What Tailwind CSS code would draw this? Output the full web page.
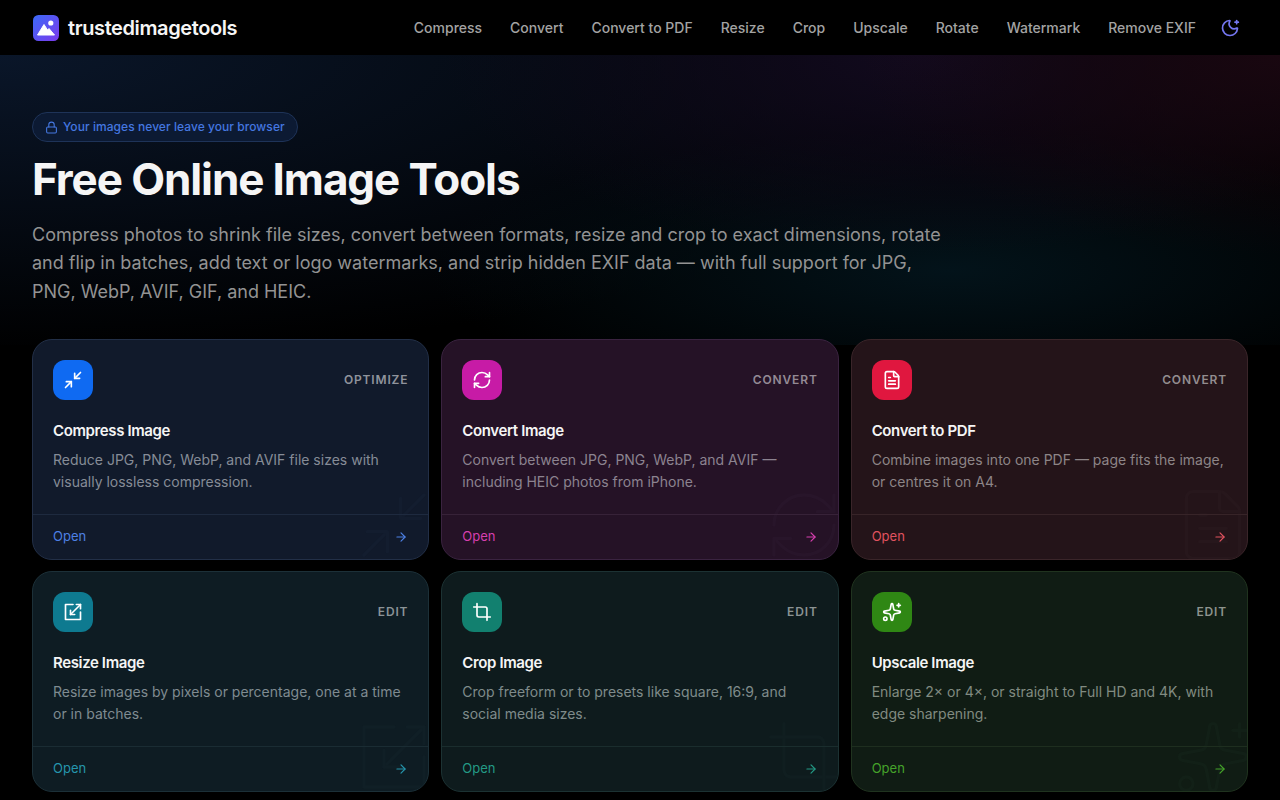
<!DOCTYPE html>
<html lang="en">
<head>
    <meta charset="UTF-8">
    <meta name="viewport" content="width=device-width, initial-scale=1">
    <title>Free Online Image Tools</title>
    <script src="https://cdn.jsdelivr.net/npm/@tailwindcss/browser@4"></script>
</head>
<body class="bg-black text-white font-[Inter,sans-serif] h-screen overflow-hidden">

    <!-- Header -->
    <header class="h-[55px] bg-black flex items-center justify-between pl-[33px] pr-10">
        <a href="#" class="flex items-center gap-2">
            <svg class="w-[27px] h-[27px] mt-[2px]" viewBox="0 0 27 27">
                <defs>
                    <linearGradient id="logo-grad" x1="0" y1="0" x2="1" y2="1">
                        <stop offset="0" stop-color="#3b6af6"/>
                        <stop offset="1" stop-color="#7c3aed"/>
                    </linearGradient>
                </defs>
                <rect width="26" height="26" rx="5.5" fill="url(#logo-grad)"/>
                <circle cx="17.8" cy="8" r="2.6" fill="#fff"/>
                <path d="M4.5 20 11 9.5 14.5 15 16 13.5 21.5 20z" fill="#fff" stroke="#fff" stroke-linejoin="round"/>
            </svg>
            <span class="text-[20px] font-semibold tracking-[-0.02em] text-neutral-100">trustedimagetools</span>
        </a>
        <nav class="flex items-center gap-7 text-sm font-medium text-[#a3a3a3]">
            <a href="#" class="translate-x-px">Compress</a>
            <a href="#" class="translate-x-px">Convert</a>
            <a href="#" class="translate-x-px">Convert to PDF</a>
            <a href="#" class="translate-x-px">Resize</a>
            <a href="#" class="translate-x-px">Crop</a>
            <a href="#" class="translate-x-px">Upscale</a>
            <a href="#" class="translate-x-px">Rotate</a>
            <a href="#" class="translate-x-px">Watermark</a>
            <a href="#" class="translate-x-px">Remove EXIF</a>
            <button class="text-[#7476f0] -ml-[3px]">
                <svg class="w-5 h-5" viewBox="0 0 24 24" fill="none" stroke="currentColor" stroke-width="2" stroke-linecap="round" stroke-linejoin="round"><path d="M18 5h4"/><path d="M20 3v4"/><path d="M20.985 12.486a9 9 0 1 1-9.473-9.472c.405-.022.617.46.402.803a6 6 0 0 0 8.268 8.268c.344-.215.825-.004.803.401"/></svg>
            </button>
        </nav>
    </header>

    <main class="relative px-8 pt-[57px]">
        <!-- Hero glow -->
        <div class="absolute inset-x-0 top-0 h-[290px] bg-[radial-gradient(ellipse_420px_200px_at_100%_0,#190710,transparent),radial-gradient(ellipse_480px_200px_at_72%_0,#120a1e,transparent),radial-gradient(ellipse_520px_140px_at_950px_215px,#03131a,transparent),radial-gradient(ellipse_1050px_300px_at_0_0,#0a1629,transparent)]"></div>

        <!-- Hero -->
        <section class="relative">
            <div class="inline-flex items-center gap-[5px] h-[30px] pl-3 pr-3 rounded-full border border-[#1e3358] bg-[#0c1a33] text-xs font-medium tracking-[0.005em] text-[#4477e0]">
                <svg class="w-[13px] h-[13px]" viewBox="0 0 24 24" fill="none" stroke="currentColor" stroke-width="2" stroke-linecap="round" stroke-linejoin="round"><rect x="3" y="11" width="18" height="11" rx="2"/><path d="M7 11V7a5 5 0 0 1 10 0v4"/></svg>
                Your images never leave your browser
            </div>
            <h1 class="mt-[9px] text-[44px] leading-[56px] font-bold tracking-[-0.025em] text-neutral-100">Free Online Image Tools</h1>
            <p class="mt-[13.5px] h-[85.5px] max-w-[920px] text-lg leading-[28.8px] text-[#939393]">Compress photos to shrink file sizes, convert between formats, resize and crop to exact dimensions, rotate and flip in batches, add text or logo watermarks, and strip hidden EXIF data — with full support for JPG, PNG, WebP, AVIF, GIF, and HEIC.</p>
        </section>

        <!-- Tools -->
        <section class="relative mt-[32.5px] grid grid-cols-3 gap-x-3 gap-y-[11px]">

            <a href="#" class="relative overflow-hidden h-[221px] flex flex-col rounded-[20px] border border-[#222f47] bg-[#111a2b]">
                <svg class="absolute -right-[6px] -bottom-[6px] w-20 h-20 text-[#131d2f]" viewBox="0 0 24 24" fill="none" stroke="currentColor" stroke-width="1" stroke-linecap="round" stroke-linejoin="round"><path d="m14 10 7-7"/><path d="M20 10h-6V4"/><path d="m3 21 7-7"/><path d="M4 14h6v6"/></svg>
                <div class="relative flex-1 px-5 pt-5">
                    <div class="flex items-center justify-between">
                        <div class="w-10 h-10 rounded-xl bg-[#0f6af2] flex items-center justify-center">
                            <svg class="w-5 h-5" viewBox="0 0 24 24" fill="none" stroke="currentColor" stroke-width="2" stroke-linecap="round" stroke-linejoin="round"><path d="m14 10 7-7"/><path d="M20 10h-6V4"/><path d="m3 21 7-7"/><path d="M4 14h6v6"/></svg>
                        </div>
                        <span class="text-xs font-semibold tracking-[0.07em] text-[#8f939c]">OPTIMIZE</span>
                    </div>
                    <h2 class="mt-[19px] text-[15px] leading-[24px] font-semibold tracking-[-0.025em] text-neutral-100">Compress Image</h2>
                    <p class="mt-[6px] text-sm leading-[22px] text-[#868c97]">Reduce JPG, PNG, WebP, and AVIF file sizes with visually lossless compression.</p>
                </div>
                <div class="relative h-[45px] px-5 flex items-center justify-between border-t border-[#1e2a3f] text-[13px] text-[#4d80e4]">
                    <span>Open</span>
                    <svg class="w-[14px] h-[14px]" viewBox="0 0 24 24" fill="none" stroke="currentColor" stroke-width="2" stroke-linecap="round" stroke-linejoin="round"><path d="M5 12h14"/><path d="m12 5 7 7-7 7"/></svg>
                </div>
            </a>

            <a href="#" class="relative overflow-hidden h-[221px] flex flex-col rounded-[20px] border border-[#3a2340] bg-[#251226]">
                <svg class="absolute -right-[6px] -bottom-[6px] w-20 h-20 text-[#28152a]" viewBox="0 0 24 24" fill="none" stroke="currentColor" stroke-width="1" stroke-linecap="round" stroke-linejoin="round"><path d="M3 12a9 9 0 0 1 9-9 9.75 9.75 0 0 1 6.74 2.74L21 8"/><path d="M21 3v5h-5"/><path d="M21 12a9 9 0 0 1-9 9 9.75 9.75 0 0 1-6.74-2.74L3 16"/><path d="M8 16H3v5"/></svg>
                <div class="relative flex-1 px-5 pt-5">
                    <div class="flex items-center justify-between">
                        <div class="w-10 h-10 rounded-xl bg-[#c71ba6] flex items-center justify-center">
                            <svg class="w-5 h-5" viewBox="0 0 24 24" fill="none" stroke="currentColor" stroke-width="2" stroke-linecap="round" stroke-linejoin="round"><path d="M3 12a9 9 0 0 1 9-9 9.75 9.75 0 0 1 6.74 2.74L21 8"/><path d="M21 3v5h-5"/><path d="M21 12a9 9 0 0 1-9 9 9.75 9.75 0 0 1-6.74-2.74L3 16"/><path d="M8 16H3v5"/></svg>
                        </div>
                        <span class="text-xs font-semibold tracking-[0.07em] text-[#948a95]">CONVERT</span>
                    </div>
                    <h2 class="mt-[19px] text-[15px] leading-[24px] font-semibold tracking-[-0.025em] text-neutral-100">Convert Image</h2>
                    <p class="mt-[6px] text-sm leading-[22px] text-[#8c8390]">Convert between JPG, PNG, WebP, and AVIF — including HEIC photos from iPhone.</p>
                </div>
                <div class="relative h-[45px] px-5 flex items-center justify-between border-t border-[#372238] text-[13px] text-[#d63fae]">
                    <span>Open</span>
                    <svg class="w-[14px] h-[14px]" viewBox="0 0 24 24" fill="none" stroke="currentColor" stroke-width="2" stroke-linecap="round" stroke-linejoin="round"><path d="M5 12h14"/><path d="m12 5 7 7-7 7"/></svg>
                </div>
            </a>

            <a href="#" class="relative overflow-hidden h-[221px] flex flex-col rounded-[20px] border border-[#3a2529] bg-[#241419]">
                <svg class="absolute -right-[6px] -bottom-[6px] w-20 h-20 text-[#27171c]" viewBox="0 0 24 24" fill="none" stroke="currentColor" stroke-width="1" stroke-linecap="round" stroke-linejoin="round"><path d="M6 22a2 2 0 0 1-2-2V4a2 2 0 0 1 2-2h8a2.4 2.4 0 0 1 1.704.706l3.588 3.588A2.4 2.4 0 0 1 20 8v12a2 2 0 0 1-2 2z"/><path d="M14 2v5a1 1 0 0 0 1 1h5"/><path d="M10 9H8"/><path d="M16 13H8"/><path d="M16 17H8"/></svg>
                <div class="relative flex-1 px-5 pt-5">
                    <div class="flex items-center justify-between">
                        <div class="w-10 h-10 rounded-xl bg-[#e0173f] flex items-center justify-center">
                            <svg class="w-5 h-5" viewBox="0 0 24 24" fill="none" stroke="currentColor" stroke-width="2" stroke-linecap="round" stroke-linejoin="round"><path d="M6 22a2 2 0 0 1-2-2V4a2 2 0 0 1 2-2h8a2.4 2.4 0 0 1 1.704.706l3.588 3.588A2.4 2.4 0 0 1 20 8v12a2 2 0 0 1-2 2z"/><path d="M14 2v5a1 1 0 0 0 1 1h5"/><path d="M10 9H8"/><path d="M16 13H8"/><path d="M16 17H8"/></svg>
                        </div>
                        <span class="text-xs font-semibold tracking-[0.07em] text-[#938d8f]">CONVERT</span>
                    </div>
                    <h2 class="mt-[19px] text-[15px] leading-[24px] font-semibold tracking-[-0.025em] text-neutral-100">Convert to PDF</h2>
                    <p class="mt-[6px] text-sm leading-[22px] text-[#8d8587]">Combine images into one PDF — page fits the image, or centres it on A4.</p>
                </div>
                <div class="relative h-[45px] px-5 flex items-center justify-between border-t border-[#372428] text-[13px] text-[#e0525f]">
                    <span>Open</span>
                    <svg class="w-[14px] h-[14px]" viewBox="0 0 24 24" fill="none" stroke="currentColor" stroke-width="2" stroke-linecap="round" stroke-linejoin="round"><path d="M5 12h14"/><path d="m12 5 7 7-7 7"/></svg>
                </div>
            </a>

            <a href="#" class="relative overflow-hidden h-[221px] flex flex-col rounded-[20px] border border-[#1c3038] bg-[#0e1c23]">
                <svg class="absolute -right-[6px] -bottom-[6px] w-20 h-20 text-[#101f26]" viewBox="0 0 24 24" fill="none" stroke="currentColor" stroke-width="1" stroke-linecap="round" stroke-linejoin="round"><path d="M21 3 9 15"/><path d="M12 3H3v18h18v-9"/><path d="M16 3h5v5"/><path d="M14 15H9v-5"/></svg>
                <div class="relative flex-1 px-5 pt-5">
                    <div class="flex items-center justify-between">
                        <div class="w-10 h-10 rounded-xl bg-[#0e7a90] flex items-center justify-center">
                            <svg class="w-5 h-5" viewBox="0 0 24 24" fill="none" stroke="currentColor" stroke-width="2" stroke-linecap="round" stroke-linejoin="round"><path d="M21 3 9 15"/><path d="M12 3H3v18h18v-9"/><path d="M16 3h5v5"/><path d="M14 15H9v-5"/></svg>
                        </div>
                        <span class="text-xs font-semibold tracking-[0.07em] text-[#8b9397]">EDIT</span>
                    </div>
                    <h2 class="mt-[19px] text-[15px] leading-[24px] font-semibold tracking-[-0.025em] text-neutral-100">Resize Image</h2>
                    <p class="mt-[6px] text-sm leading-[22px] text-[#7f8b91]">Resize images by pixels or percentage, one at a time or in batches.</p>
                </div>
                <div class="relative h-[45px] px-5 flex items-center justify-between border-t border-[#1a2c33] text-[13px] text-[#2596ad]">
                    <span>Open</span>
                    <svg class="w-[14px] h-[14px]" viewBox="0 0 24 24" fill="none" stroke="currentColor" stroke-width="2" stroke-linecap="round" stroke-linejoin="round"><path d="M5 12h14"/><path d="m12 5 7 7-7 7"/></svg>
                </div>
            </a>

            <a href="#" class="relative overflow-hidden h-[221px] flex flex-col rounded-[20px] border border-[#1c3233] bg-[#0e1b1d]">
                <svg class="absolute -right-[6px] -bottom-[6px] w-20 h-20 text-[#101e20]" viewBox="0 0 24 24" fill="none" stroke="currentColor" stroke-width="1" stroke-linecap="round" stroke-linejoin="round"><path d="M6 2v14a2 2 0 0 0 2 2h14"/><path d="M18 22V8a2 2 0 0 0-2-2H2"/></svg>
                <div class="relative flex-1 px-5 pt-5">
                    <div class="flex items-center justify-between">
                        <div class="w-10 h-10 rounded-xl bg-[#12806f] flex items-center justify-center">
                            <svg class="w-5 h-5" viewBox="0 0 24 24" fill="none" stroke="currentColor" stroke-width="2" stroke-linecap="round" stroke-linejoin="round"><path d="M6 2v14a2 2 0 0 0 2 2h14"/><path d="M18 22V8a2 2 0 0 0-2-2H2"/></svg>
                        </div>
                        <span class="text-xs font-semibold tracking-[0.07em] text-[#8b9393]">EDIT</span>
                    </div>
                    <h2 class="mt-[19px] text-[15px] leading-[24px] font-semibold tracking-[-0.025em] text-neutral-100">Crop Image</h2>
                    <p class="mt-[6px] text-sm leading-[22px] text-[#7f8b8b]">Crop freeform or to presets like square, 16:9, and social media sizes.</p>
                </div>
                <div class="relative h-[45px] px-5 flex items-center justify-between border-t border-[#1a2d2d] text-[13px] text-[#239a85]">
                    <span>Open</span>
                    <svg class="w-[14px] h-[14px]" viewBox="0 0 24 24" fill="none" stroke="currentColor" stroke-width="2" stroke-linecap="round" stroke-linejoin="round"><path d="M5 12h14"/><path d="m12 5 7 7-7 7"/></svg>
                </div>
            </a>

            <a href="#" class="relative overflow-hidden h-[221px] flex flex-col rounded-[20px] border border-[#20331f] bg-[#101c14]">
                <svg class="absolute -right-[6px] -bottom-[6px] w-20 h-20 text-[#122017]" viewBox="0 0 24 24" fill="none" stroke="currentColor" stroke-width="1" stroke-linecap="round" stroke-linejoin="round"><path d="M11.017 2.814a1 1 0 0 1 1.966 0l1.051 5.558a2 2 0 0 0 1.594 1.594l5.558 1.051a1 1 0 0 1 0 1.966l-5.558 1.051a2 2 0 0 0-1.594 1.594l-1.051 5.558a1 1 0 0 1-1.966 0l-1.051-5.558a2 2 0 0 0-1.594-1.594l-5.558-1.051a1 1 0 0 1 0-1.966l5.558-1.051a2 2 0 0 0 1.594-1.594z"/><path d="M20 2v4"/><path d="M22 4h-4"/><circle cx="4" cy="20" r="2"/></svg>
                <div class="relative flex-1 px-5 pt-5">
                    <div class="flex items-center justify-between">
                        <div class="w-10 h-10 rounded-xl bg-[#2f8714] flex items-center justify-center">
                            <svg class="w-5 h-5" viewBox="0 0 24 24" fill="none" stroke="currentColor" stroke-width="2" stroke-linecap="round" stroke-linejoin="round"><path d="M11.017 2.814a1 1 0 0 1 1.966 0l1.051 5.558a2 2 0 0 0 1.594 1.594l5.558 1.051a1 1 0 0 1 0 1.966l-5.558 1.051a2 2 0 0 0-1.594 1.594l-1.051 5.558a1 1 0 0 1-1.966 0l-1.051-5.558a2 2 0 0 0-1.594-1.594l-5.558-1.051a1 1 0 0 1 0-1.966l5.558-1.051a2 2 0 0 0 1.594-1.594z"/><path d="M20 2v4"/><path d="M22 4h-4"/><circle cx="4" cy="20" r="2"/></svg>
                        </div>
                        <span class="text-xs font-semibold tracking-[0.07em] text-[#8d938d]">EDIT</span>
                    </div>
                    <h2 class="mt-[19px] text-[15px] leading-[24px] font-semibold tracking-[-0.025em] text-neutral-100">Upscale Image</h2>
                    <p class="mt-[6px] text-sm leading-[22px] text-[#818b81]">Enlarge 2× or 4×, or straight to Full HD and 4K, with edge sharpening.</p>
                </div>
                <div class="relative h-[45px] px-5 flex items-center justify-between border-t border-[#1e2e1f] text-[13px] text-[#45a32a]">
                    <span>Open</span>
                    <svg class="w-[14px] h-[14px]" viewBox="0 0 24 24" fill="none" stroke="currentColor" stroke-width="2" stroke-linecap="round" stroke-linejoin="round"><path d="M5 12h14"/><path d="m12 5 7 7-7 7"/></svg>
                </div>
            </a>

        </section>
    </main>

</body>
</html>
